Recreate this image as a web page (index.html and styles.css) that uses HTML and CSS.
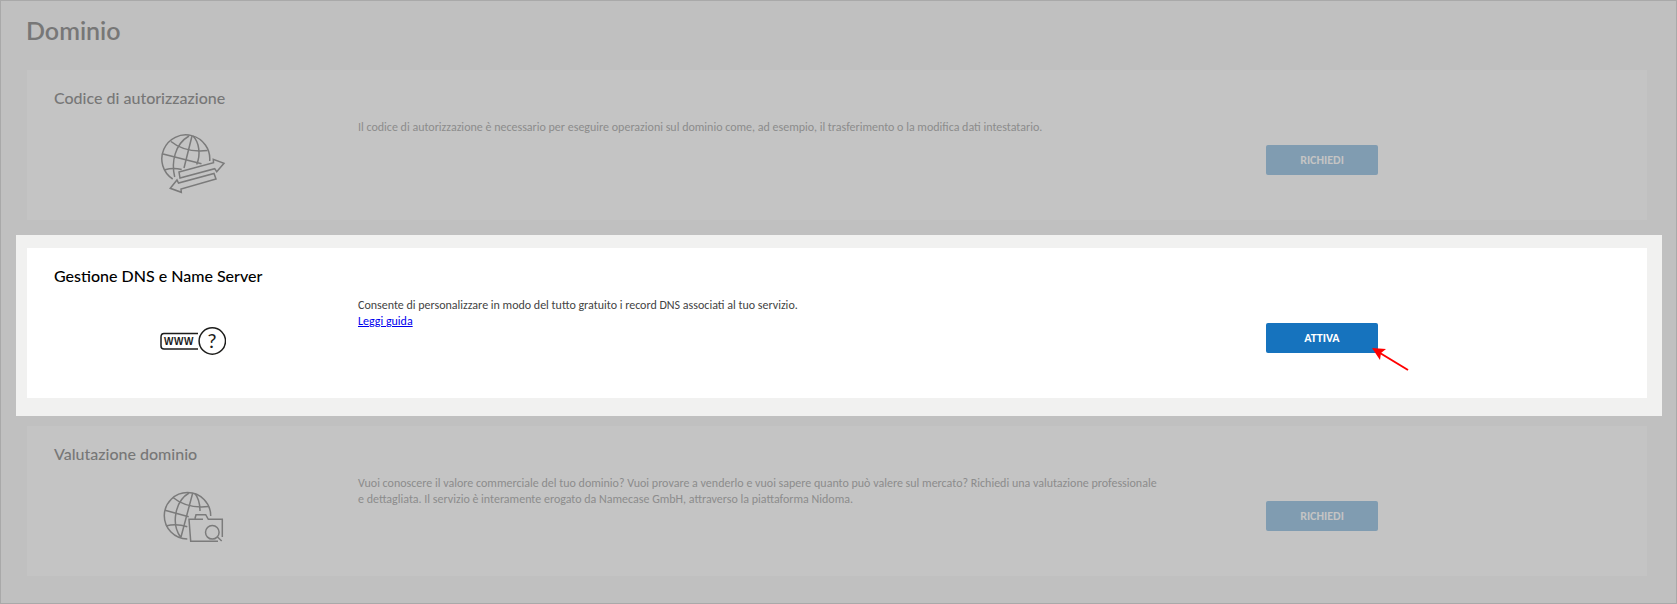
FILE: index.html
```html
<!DOCTYPE html>
<html lang="it">
<head>
    <meta charset="UTF-8">
    <meta name="viewport" content="width=device-width, initial-scale=1.0">
    <title>Dominio</title>
    <link rel="stylesheet" href="styles.css">
</head>
<body>
    <main class="page">
        <h1>Dominio</h1>

        <section class="card dimmed">
            <h2>Codice di autorizzazione</h2>
            <div class="card-row">
                <svg class="icon" viewBox="0 0 66 66" aria-hidden="true">
                    <path d="M12.7 49A24 24 0 1 1 49.7 31"/>
                    <path d="M32 6L24 38M29 6C15 14 11 32 14.7 47M33 6C39 12 41 24 36.7 34.5"/>
                    <path d="M11 11.500C20 19 33 22 47.500 20.500M3 24L41.500 33.700M5 39.700Q13 37.500 21.700 39.500"/>
                    <path d="M19 42L53.500 32.700L53.300 29.300L64 33.300L56.700 41.700L54.700 38.700L20 48Z"/>
                    <path d="M10.300 58.300L17 50L18.500 53L54 43.500L56 49L21 59L21.300 62.300Z"/>
                </svg>
                <div class="description">
                    <p>Il codice di autorizzazione è necessario per eseguire operazioni sul dominio come, ad esempio, il trasferimento o la modifica dati intestatario.</p>
                </div>
                <div class="action">
                    <button type="button">RICHIEDI</button>
                </div>
            </div>
        </section>

        <div class="highlight">
            <section class="card">
                <h2>Gestione DNS e Name Server</h2>
                <div class="card-row">
                    <svg class="icon" viewBox="0 0 66 66" aria-hidden="true">
                        <path d="M38 25.500H4Q1 25.500 1 29V38Q1 41 4 41H38"/>
                        <circle cx="52.300" cy="33" r="13.200"/>
                        <text class="icon-www" x="4 14 24" y="37">WWW</text>
                        <text class="icon-mark" x="52" y="40">?</text>
                    </svg>
                    <div class="description">
                        <p>Consente di personalizzare in modo del tutto gratuito i record DNS associati al tuo servizio.</p>
                        <a href="#guida">Leggi guida</a>
                    </div>
                    <div class="action">
                        <button type="button">ATTIVA</button>
                        <svg class="pointer" viewBox="0 0 38 24" aria-hidden="true">
                            <path class="pointer-line" d="M8 5L36 22"/>
                            <path class="pointer-head" d="M0 0L14 1L9 5L8 12Z"/>
                        </svg>
                    </div>
                </div>
            </section>
        </div>

        <section class="card dimmed">
            <h2>Valutazione dominio</h2>
            <div class="card-row">
                <svg class="icon" viewBox="0 0 66 66" aria-hidden="true">
                    <path d="M27.300 53A23.200 23.200 0 1 1 50.700 30"/>
                    <path d="M32.700 7L21 51M29 7C15 15 11 38 20.500 51M35 7.500Q40 14 40 25"/>
                    <path d="M13 11.500C22 19 34 22 48.500 20.500M5 24.300L28.700 30.700M6 40Q16 37 27.300 40.700"/>
                    <path d="M43 33.300H29L30.700 55.300H58M35 32.500L36 28.700H45.700L48.300 33.300H62.300V51"/>
                    <circle cx="52.300" cy="46.300" r="6.800"/>
                    <path d="M57.500 51L61.700 55"/>
                </svg>
                <div class="description">
                    <p>Vuoi conoscere il valore commerciale del tuo dominio? Vuoi provare a venderlo e vuoi sapere quanto può valere sul mercato? Richiedi una valutazione professionale e dettagliata. Il servizio è interamente erogato da Namecase GmbH, attraverso la piattaforma Nidoma.</p>
                </div>
                <div class="action">
                    <button type="button">RICHIEDI</button>
                </div>
            </div>
        </section>
    </main>
</body>
</html>
```

FILE: styles.css
```css
* {
    margin: 0;
    padding: 0;
    box-sizing: border-box;
}
body {
    font-family: Carlito, Lato, sans-serif;
    font-size: 12px;
    line-height: 16px;
    background-color: #c0c0c0;
    color: #444;
}
.page {
    min-height: 100vh;
    padding: 13px 14px 20px 15px;
    border: 1px solid #a9a9a9;
}
h1 {
    margin: 0 0 24px 10px;
    font-family: Lato, sans-serif;
    font-size: 25px;
    font-weight: 600;
    line-height: 32px;
    color: #777;
}
.card {
    min-height: 150px;
    padding: 17px 27px;
    background-color: #fff;
}
.card h2 {
    font-family: Lato, sans-serif;
    font-size: 16px;
    font-weight: 500;
    line-height: 22px;
    color: #000;
}
.card-row {
    display: grid;
    grid-template-columns: 278fr 802fr 272fr 136fr;
    column-gap: 26px;
    align-items: start;
    padding-top: 10px;
}
.icon {
    justify-self: center;
    width: 66px;
    height: 66px;
    margin-top: 11px;
    fill: none;
    stroke: #1d1d1b;
    stroke-width: 1.5;
}
.icon text {
    fill: #1d1d1b;
    stroke: none;
}
.icon-www {
    font-family: "Liberation Sans", sans-serif;
    font-size: 10px;
    font-weight: 700;
}
.icon-mark {
    font-family: Lato, sans-serif;
    font-size: 20px;
    text-anchor: middle;
}
.description a {
    color: #00e;
}
.action {
    position: relative;
    justify-self: center;
    margin-top: 26px;
}
button {
    display: block;
    width: 112px;
    height: 30px;
    font-family: Carlito, Lato, sans-serif;
    font-size: 12px;
    font-weight: 700;
    background-color: #1673be;
    color: #fff;
    border: none;
    border-radius: 2px;
    cursor: pointer;
}
.pointer {
    position: absolute;
    top: 25px;
    left: 106px;
    width: 38px;
    height: 24px;
}
.pointer-line {
    stroke: #f00;
    stroke-width: 2;
}
.pointer-head {
    fill: #f00;
}

/* Guided step: only the middle card stays lit */
.highlight {
    margin: 15px 0 10px;
    padding: 13px 15px 18px 11px;
    background-color: #f1f1f0;
}
.dimmed {
    margin: 0 15px 0 11px;
    background-color: #c4c4c4;
    color: #8c8c8c;
}
.dimmed h2 {
    color: #777;
}
.dimmed .icon {
    stroke: #7b7b7b;
}
.dimmed button {
    background-color: #809cb1;
    color: #c4c4c4;
}
```
